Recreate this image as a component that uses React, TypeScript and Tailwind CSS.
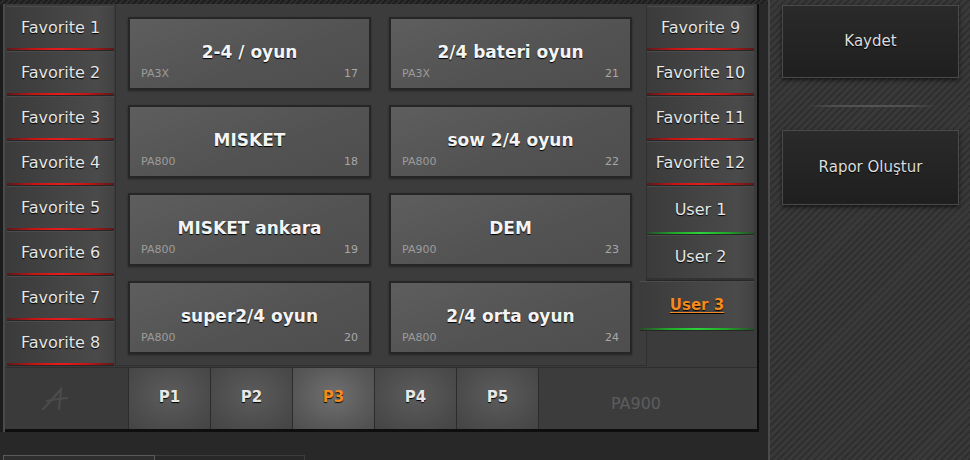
import React from 'react'

const leftFavs = ['Favorite 1', 'Favorite 2', 'Favorite 3', 'Favorite 4', 'Favorite 5', 'Favorite 6', 'Favorite 7', 'Favorite 8']

const tiles = [
  { title: '2-4 / oyun', model: 'PA3X', num: 17 },
  { title: '2/4 bateri oyun', model: 'PA3X', num: 21 },
  { title: 'MISKET', model: 'PA800', num: 18 },
  { title: 'sow 2/4 oyun', model: 'PA800', num: 22 },
  { title: 'MISKET ankara', model: 'PA800', num: 19 },
  { title: 'DEM', model: 'PA900', num: 23 },
  { title: 'super2/4 oyun', model: 'PA800', num: 20 },
  { title: '2/4 orta oyun', model: 'PA800', num: 24 },
]

const tabs = ['P1', 'P2', 'P3', 'P4', 'P5']

function SideButton({ label, line, active, wide, h = 'h-[45px]' }: { label: string; line: 'red' | 'green' | 'none'; active?: boolean; wide?: boolean; h?: string }) {
  return (
    <div className={`flex flex-col ${h} ${wide ? 'w-[114px] -ml-[7px]' : 'w-[107px]'} bg-[linear-gradient(90deg,#3b3b3b,#454545_55%,#4a4a4a_85%,#424242)] border-t border-[#4c4c4c]`}>
      <div className="flex-1 flex items-center justify-center">
        {active ? (
          <span className="text-[15px] font-bold text-[#f28a1d] underline underline-offset-2 [text-shadow:0_1px_1px_#000]">{label}</span>
        ) : (
          <span className="text-[16px] text-[#e6e6e6] [text-shadow:0_1px_1px_#000]">{label}</span>
        )}
      </div>
      {line === 'red' && <div className="h-[2px] bg-[linear-gradient(90deg,#5a1a1a,#c41414_25%,#e61c1c_50%,#c41414_75%,#5a1a1a)]" />}
      {line === 'green' && <div className="h-[2px] bg-[linear-gradient(90deg,#2a4a2a,#1fa82a_25%,#2ed23a_50%,#1fa82a_75%,#2a4a2a)]" />}
      {line === 'none' && <div className="h-[2px] bg-[#333]" />}
      <div className="h-[1px] bg-[#262626]" />
    </div>
  )
}

function Tile({ title, model, num }: { title: string; model: string; num: number }) {
  return (
    <div className="relative h-[73px] border-2 border-[#262626] bg-[linear-gradient(160deg,#5e5e5e,#525252_60%,#4e4e4e)] shadow-[0_1px_2px_rgba(0,0,0,0.4)] flex items-center justify-center">
      <span className="text-[17px] font-bold text-[#f4f4f4] [text-shadow:0_1px_1px_#000] -mt-[2px]">{title}</span>
      <span className="absolute left-[11px] bottom-[6px] text-[11px] text-[#9c9c9c]">{model}</span>
      <span className="absolute right-[11px] bottom-[6px] text-[11px] text-[#a8a8a8]">{num}</span>
    </div>
  )
}

export default function App() {
  return (
    <div className="w-[970px] h-[460px] flex bg-[#282828] overflow-hidden font-['DejaVu_Sans',Verdana,sans-serif]">
      <div className="w-[768px] flex flex-col">
        <div className="h-[4px] bg-[repeating-linear-gradient(135deg,#1e1e1e_0px,#1e1e1e_2px,#2c2c2c_2px,#2c2c2c_4px)]" />
        <div className="flex">
          <div className="w-[5px] h-[428px] bg-[#1c1c1c] border-r-2 border-[#4a4a4a]" />
          <div className="w-[754px] h-[428px] flex flex-col bg-[#3b3b3b] border-r-2 border-b-[3px] border-[#0e0e0e]">
            <div className="h-[363px] flex">
              {/* left favorites */}
              <div className="w-[110px] pl-[2px] pt-[2px] flex flex-col">
                {leftFavs.map(f => (
                  <SideButton key={f} label={f} line="red" />
                ))}
              </div>

              {/* tile grid */}
              <div className="w-[532px] h-[362px] border border-t-0 border-[#303030] bg-[#3c3c3c]">
                <div className="grid grid-cols-[243px_243px] gap-x-[18px] gap-y-[15px] pl-[12px] pt-[13px]">
                  {tiles.map(t => (
                    <Tile key={t.num} {...t} />
                  ))}
                </div>
              </div>

              {/* right favorites / users */}
              <div className="w-[110px] pt-[2px] flex flex-col">
                <SideButton label="Favorite 9" line="red" />
                <SideButton label="Favorite 10" line="red" />
                <SideButton label="Favorite 11" line="red" />
                <SideButton label="Favorite 12" line="red" />
                <SideButton label="User 1" line="green" h="h-[49px]" />
                <SideButton label="User 2" line="none" h="h-[46px]" />
                <SideButton label="User 3" line="green" active wide h="h-[50px]" />
              </div>
            </div>

            {/* bottom bar */}
            <div className="h-[62px] flex border-t border-[#2e2e2e]">
              <div className="w-[123px] flex items-center justify-center pr-[24px] bg-[#3a3a3a]">
                <svg width="28" height="24" viewBox="0 0 28 24" fill="none" stroke="#4c4c4c" strokeWidth="2" strokeLinecap="round">
                  <path d="M2 22 Q10 14 20 2 L18 22" />
                  <path d="M6 14 Q15 12 26 11" />
                </svg>
              </div>
              {tabs.map(t => (
                <div
                  key={t}
                  className={`w-[82px] flex items-center justify-center border-l border-[#2c2c2c] ${
                    t === 'P3'
                      ? 'bg-[radial-gradient(ellipse_at_50%_45%,#707070,#5a5a5a_60%,#4e4e4e)]'
                      : 'bg-[radial-gradient(ellipse_at_50%_45%,#5c5c5c,#4c4c4c_65%,#444)]'
                  }`}
                >
                  <span className={`text-[15px] font-bold -mt-[2px] [text-shadow:0_1px_1px_#000] ${t === 'P3' ? 'text-[#f28a1d]' : 'text-[#e8e8e8]'}`}>{t}</span>
                </div>
              ))}
              <div className="flex-1 flex items-center justify-center pt-[10px] pr-[24px] border-l border-[#2c2c2c] bg-[#3c3c3c]">
                <span className="text-[16px] text-[#5c5c5c]">PA900</span>
              </div>
            </div>
          </div>
        </div>
        <div className="flex-1 flex items-end pl-[3px]">
          <div className="w-[152px] h-[5px] border-t border-l border-r border-[#5a5a5a] bg-[#2e2e2e]" />
          <div className="w-[150px] h-[5px] border-t border-r border-[#3c3c3c]" />
        </div>
      </div>

      {/* right actions panel */}
      <div className="flex-1 border-l-2 border-[#4a4a4a] bg-[repeating-linear-gradient(135deg,#2f2f2f_0px,#2f2f2f_2px,#393939_2px,#393939_5px)] pl-[12px] pr-[9px] pt-[5px] flex flex-col">
        <button className="h-[73px] w-[177px] border border-[#4a4a4a] bg-[linear-gradient(#2a2a2a,#1f1f1f)] shadow-[0_2px_4px_rgba(0,0,0,0.6)] text-[15px] text-[#dcdcdc] [text-shadow:0_1px_1px_#000]">
          Kaydet
        </button>
        <div className="mt-[27px] ml-[25px] w-[130px] h-[2px] bg-[linear-gradient(90deg,transparent,#4e4e4e_20%,#555_50%,#4e4e4e_80%,transparent)]" />
        <button className="mt-[23px] h-[75px] w-[177px] border border-[#4a4a4a] bg-[linear-gradient(#2a2a2a,#1f1f1f)] shadow-[0_2px_4px_rgba(0,0,0,0.6)] text-[15px] text-[#dcdcdc] [text-shadow:0_1px_1px_#000]">
          Rapor Oluştur
        </button>
      </div>
    </div>
  )
}
